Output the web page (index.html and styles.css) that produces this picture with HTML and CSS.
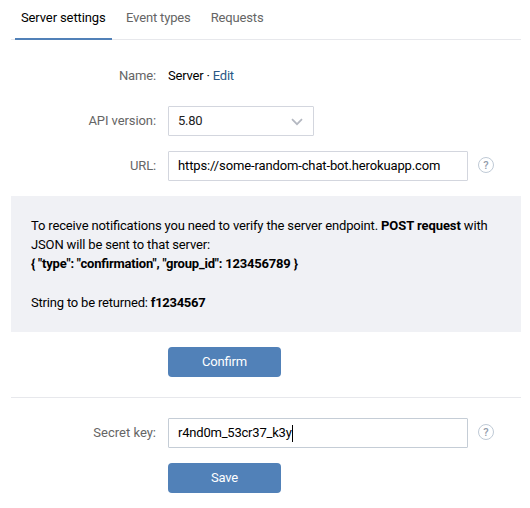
FILE: index.html
```html
<!DOCTYPE html>
<html lang="en">
<head>
<meta charset="utf-8">
<title>Server settings</title>
<link rel="stylesheet" href="styles.css">
</head>
<body>
<main class="panel">
  <nav class="tabs">
    <a class="tab active">Server settings</a>
    <a class="tab">Event types</a>
    <a class="tab">Requests</a>
  </nav>
  <div class="row name-row">
    <span class="label">Name:</span>
    <span class="value">Server · <a class="link">Edit</a></span>
  </div>
  <div class="row version-row">
    <span class="label">API version:</span>
    <div class="field select"><span>5.80</span>
      <svg class="chevron" width="12" height="8" viewBox="0 0 12 8"><path d="M1 1.2 6 6.2 11 1.2"/></svg>
    </div>
  </div>
  <div class="row url-row">
    <span class="label">URL:</span>
    <div class="field input url"><span>https://some-random-chat-bot.herokuapp.com</span></div>
    <span class="help">?</span>
  </div>
  <section class="notice">
    <p>To receive notifications you need to verify the server endpoint. <b>POST request</b> with<br>JSON will be sent to that server:<br><b class="payload">{ "type": "confirmation", "group_id": 123456789 }</b></p>
    <p class="result">String to be returned: <b>f1234567</b></p>
  </section>
  <button class="button confirm">Confirm</button>
  <section class="secret">
    <div class="row">
      <span class="label">Secret key:</span>
      <div class="field input focused"><span>r4nd0m_53cr37_k3y</span><i class="caret"></i></div>
      <span class="help">?</span>
    </div>
    <button class="button">Save</button>
  </section>
</main>
</body>
</html>
```
FILE: styles.css
```css
* { box-sizing: border-box; }
body {
  margin: 0;
  background: #fff;
  color: #000;
  font: 13px/19px Roboto, sans-serif;
  letter-spacing: -0.15px;
  font-feature-settings: "liga" 1;
}
.panel { width: 510px; margin-left: 11px; }
.tabs {
  display: flex;
  gap: 8px;
  height: 40px;
  padding-left: 4px;
  border-bottom: 1px solid #e7e8ec;
}
.tab { height: 40px; padding: 8px 6px 0; color: #656565; white-space: nowrap; }
.tab.active { width: 97px; color: #000; border-bottom: 2px solid #5181b8; letter-spacing: -0.12px; }
.row { display: flex; align-items: center; }
.label { width: 145px; margin-right: 12px; text-align: right; color: #656565; }
.name-row { margin-top: 26px; }
.value { letter-spacing: -0.2px; }
.link { color: #2a5885; }
.version-row { margin-top: 21px; }
.version-row .label { letter-spacing: -0.08px; }
.secret .label { letter-spacing: 0; }
.version-row .label, .url-row .label, .secret .label { padding-bottom: 2px; }
.field {
  display: flex;
  align-items: center;
  height: 30px;
  padding: 0 9px 1px;
  border: 1px solid #d3d6de;
  border-radius: 1px;
}
.select { width: 146px; justify-content: space-between; color: #222; letter-spacing: -0.3px; }
.chevron { margin: 3px 1px 0 0; fill: none; stroke: #b4b8c1; stroke-width: 1.7; }
.input { width: 300px; }
.url { letter-spacing: -0.13px; }
.focused { border-color: #c5cdd6; letter-spacing: -0.21px; }
.url-row { margin-top: 15px; }
.help {
  width: 16px;
  height: 16px;
  margin: -2px 0 0 10px;
  border: 1px solid #bfcad6;
  border-radius: 50%;
  color: #939cab;
  font-size: 11px;
  font-weight: 500;
  line-height: 15px;
  letter-spacing: 0;
  text-align: center;
}
.notice { height: 136px; margin-top: 15px; padding: 20px; background: #f0f1f5; white-space: nowrap; }
.notice p { margin: 0; }
.notice .result { margin-top: 20px; letter-spacing: -0.19px; }
.notice b { font-weight: 700; letter-spacing: -0.08px; }
.notice .payload { letter-spacing: -0.2px; }
.notice .result b { letter-spacing: -0.3px; }
.button {
  display: block;
  width: 113px;
  height: 30px;
  margin: 15px 0 0 157px;
  padding: 0 0 2px;
  border: 0;
  border-radius: 4px;
  background: #5181b8;
  color: #fff;
  font: inherit;
  letter-spacing: inherit;
  font-feature-settings: inherit;
}
.secret { margin-top: 20px; padding-top: 20px; border-top: 1px solid #e7e8ec; }
.caret { width: 1px; height: 17px; margin-top: 1px; background: #000; }
```
